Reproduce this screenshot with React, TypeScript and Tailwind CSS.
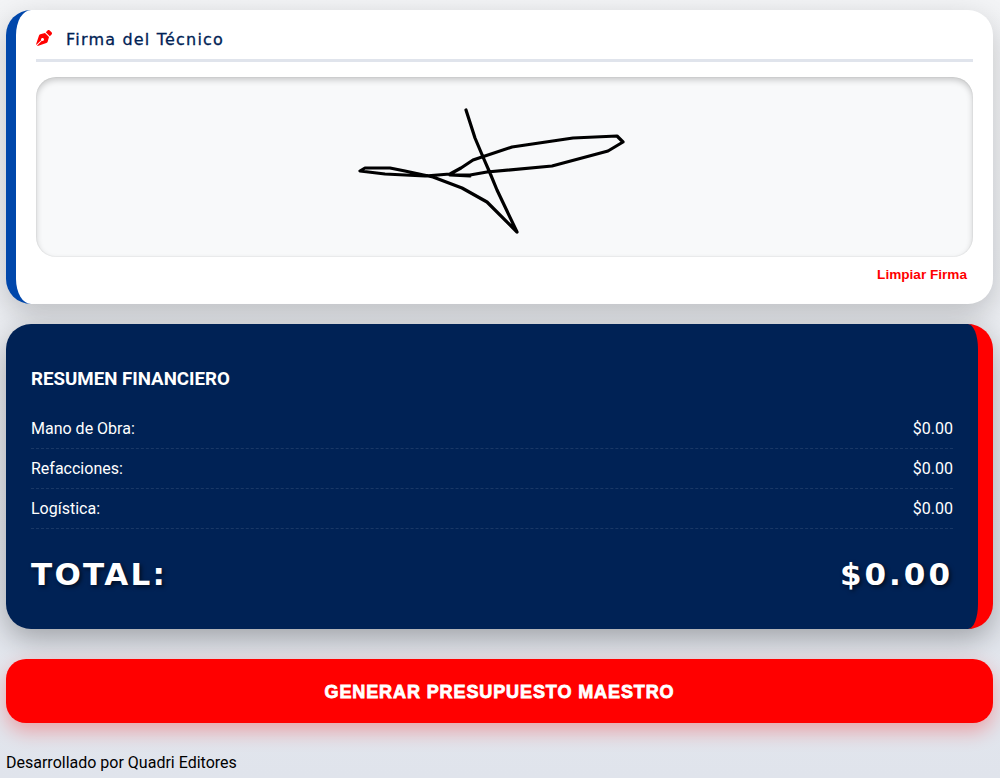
import { FaPenNib } from "react-icons/fa";

const rows = [
  { label: "Mano de Obra:", value: "$0.00" },
  { label: "Refacciones:", value: "$0.00" },
  { label: "Logística:", value: "$0.00" },
];

function SignaturePad() {
  return (
    <div className="h-[180px] rounded-[20px] bg-[#f8f9fa] p-[2px] shadow-[inset_0_3px_6px_rgba(0,0,0,0.2),inset_0_0_0_1px_rgba(0,0,0,0.03)]">
      <svg width="933" height="176" viewBox="0 0 933 176" fill="none" className="block">
        <path
          d="M428 31 L437 59 L445 78 L452 94 L459 111 L479 153 L449 123 L424 109 L395 98 L367 92 L352 89 L327 89 L322 92 L347 95 L387 97 L412 95 L423 89 L435 81 L474 68 L535 59 L579 57 L585 63 L570 72 L514 87 L449 93 L432 96 L412 96 L432 97"
          stroke="#000"
          strokeWidth="3.2"
          strokeLinejoin="round"
          strokeLinecap="round"
        />
      </svg>
    </div>
  );
}

export default function App() {
  return (
    <main className="min-h-[778px] bg-gradient-to-b from-[#f3f4f6] to-[#e0e4ec] pt-[10px] pl-[6px] pr-[7px] font-['Roboto',sans-serif] text-black">
      <section className="h-[294px] rounded-[25px] border-l-[10px] border-[#0047ab] bg-white px-5 pt-5 shadow-[0_10px_30px_rgba(0,0,0,0.2)]">
        <h3 className="flex h-[32px] items-start gap-[14px] border-b-[3px] border-[#e0e4ec] font-['DejaVu_Sans',sans-serif] text-[16px] leading-[20px] tracking-[1.2px] text-[#002255] [-webkit-text-stroke:0.3px_#002255]">
          <FaPenNib className="h-4 w-4 shrink-0 text-[#ff0000]" />
          Firma del Técnico
        </h3>
        <div className="mt-[15px]">
          <SignaturePad />
        </div>
        <div className="mt-2 flex justify-end pr-[6px]">
          <button className="font-['Liberation_Sans',sans-serif] text-[13.6px] font-bold text-[#ff0000]">Limpiar Firma</button>
        </div>
      </section>

      <section className="mt-5 h-[305px] rounded-[25px] border-r-[15px] border-[#ff0000] bg-[#002255] px-[25px] pt-[43px] text-white shadow-[0_10px_30px_rgba(0,0,0,0.3)]">
        <h3 className="text-[18.7px] leading-[24px] font-bold">RESUMEN FINANCIERO</h3>
        <div className="mt-[18px]">
          {rows.map((row) => (
            <div key={row.label} className="flex h-10 items-center justify-between border-b border-dashed border-white/10 text-base">
              <span>{row.label}</span>
              <span>{row.value}</span>
            </div>
          ))}
        </div>
        <div className="mt-6 flex items-center justify-between font-['DejaVu_Sans',sans-serif] text-[31px] leading-[42px] [text-shadow:2px_2px_4px_rgba(0,0,0,0.6)]">
          <span className="font-bold tracking-[2.3px]">TOTAL:</span>
          <span className="font-bold tracking-[3px]">$0.00</span>
        </div>
      </section>

      <button className="mt-[30px] block h-16 w-full rounded-[20px] bg-[#ff0000] pt-0.5 font-['Liberation_Sans',sans-serif] text-lg font-bold tracking-[0.9px] text-white shadow-[0_8px_20px_rgba(255,0,0,0.3)] [-webkit-text-stroke:0.8px_white]">
        GENERAR PRESUPUESTO MAESTRO
      </button>

      <p className="mt-[30px] text-base leading-[19px]">Desarrollado por Quadri Editores</p>
    </main>
  );
}
